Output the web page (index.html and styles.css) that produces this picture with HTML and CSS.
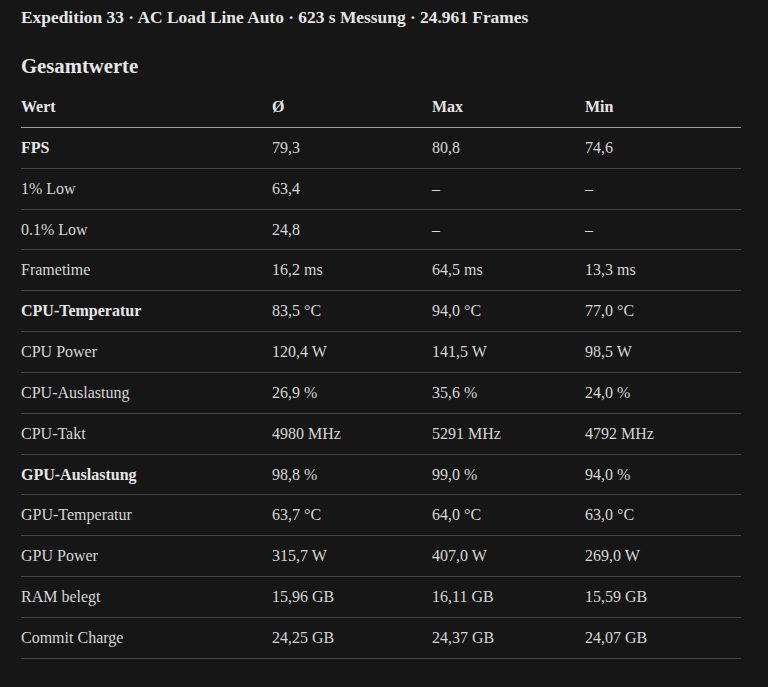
FILE: index.html
```html
<!DOCTYPE html>
<html lang="de">
<head>
<meta charset="utf-8">
<title>Expedition 33 – Gesamtwerte</title>
<link rel="stylesheet" href="styles.css">
</head>
<body>
<main class="page">
  <h1 class="title">Expedition 33 · AC Load Line Auto · 623 s Messung · 24.961 Frames</h1>
  <h2 class="section">Gesamtwerte</h2>
  <table class="stats">
    <colgroup>
      <col class="c1"><col class="c2"><col class="c3"><col class="c4">
    </colgroup>
    <thead>
      <tr><th>Wert</th><th>Ø</th><th>Max</th><th>Min</th></tr>
    </thead>
    <tbody>
      <tr><td class="strong">FPS</td><td>79,3</td><td>80,8</td><td>74,6</td></tr>
      <tr><td>1% Low</td><td>63,4</td><td>–</td><td>–</td></tr>
      <tr><td>0.1% Low</td><td>24,8</td><td>–</td><td>–</td></tr>
      <tr><td>Frametime</td><td>16,2 ms</td><td>64,5 ms</td><td>13,3 ms</td></tr>
      <tr><td class="strong">CPU-Temperatur</td><td>83,5 °C</td><td>94,0 °C</td><td>77,0 °C</td></tr>
      <tr><td>CPU Power</td><td>120,4 W</td><td>141,5 W</td><td>98,5 W</td></tr>
      <tr><td>CPU-Auslastung</td><td>26,9 %</td><td>35,6 %</td><td>24,0 %</td></tr>
      <tr><td>CPU-Takt</td><td>4980 MHz</td><td>5291 MHz</td><td>4792 MHz</td></tr>
      <tr><td class="strong">GPU-Auslastung</td><td>98,8 %</td><td>99,0 %</td><td>94,0 %</td></tr>
      <tr><td>GPU-Temperatur</td><td>63,7 °C</td><td>64,0 °C</td><td>63,0 °C</td></tr>
      <tr><td>GPU Power</td><td>315,7 W</td><td>407,0 W</td><td>269,0 W</td></tr>
      <tr><td>RAM belegt</td><td>15,96 GB</td><td>16,11 GB</td><td>15,59 GB</td></tr>
      <tr><td>Commit Charge</td><td>24,25 GB</td><td>24,37 GB</td><td>24,07 GB</td></tr>
    </tbody>
  </table>
</main>
</body>
</html>
```
FILE: styles.css
```css
html, body {
  margin: 0;
  padding: 0;
  background: #161616;
}
body {
  font-family: "Liberation Serif", "DejaVu Serif", serif;
  color: #d6d6d6;
}
.page {
  padding: 6px 27px 0 21px;
}
.title {
  margin: 0;
  font-size: 17.4px;
  line-height: 22px;
  font-weight: 700;
  color: #e6e6e6;
}
.section {
  margin: 25px 0 0;
  font-size: 20.7px;
  line-height: 26px;
  font-weight: 700;
  color: #e6e6e6;
}
.stats {
  margin-top: 8px;
  width: 720px;
  border-collapse: collapse;
  font-size: 16px;
}
.c1 { width: 251px; }
.c2 { width: 160px; }
.c3 { width: 153px; }
.c4 { width: 156px; }
.stats th,
.stats td {
  text-align: left;
  padding: 10px 0;
  line-height: 19.85px;
  border-bottom: 1px solid #454545;
}
.stats th {
  font-weight: 700;
  color: #e6e6e6;
  border-bottom-color: #9a9a9a;
}
.stats td.strong {
  font-weight: 700;
  color: #e6e6e6;
}
```
